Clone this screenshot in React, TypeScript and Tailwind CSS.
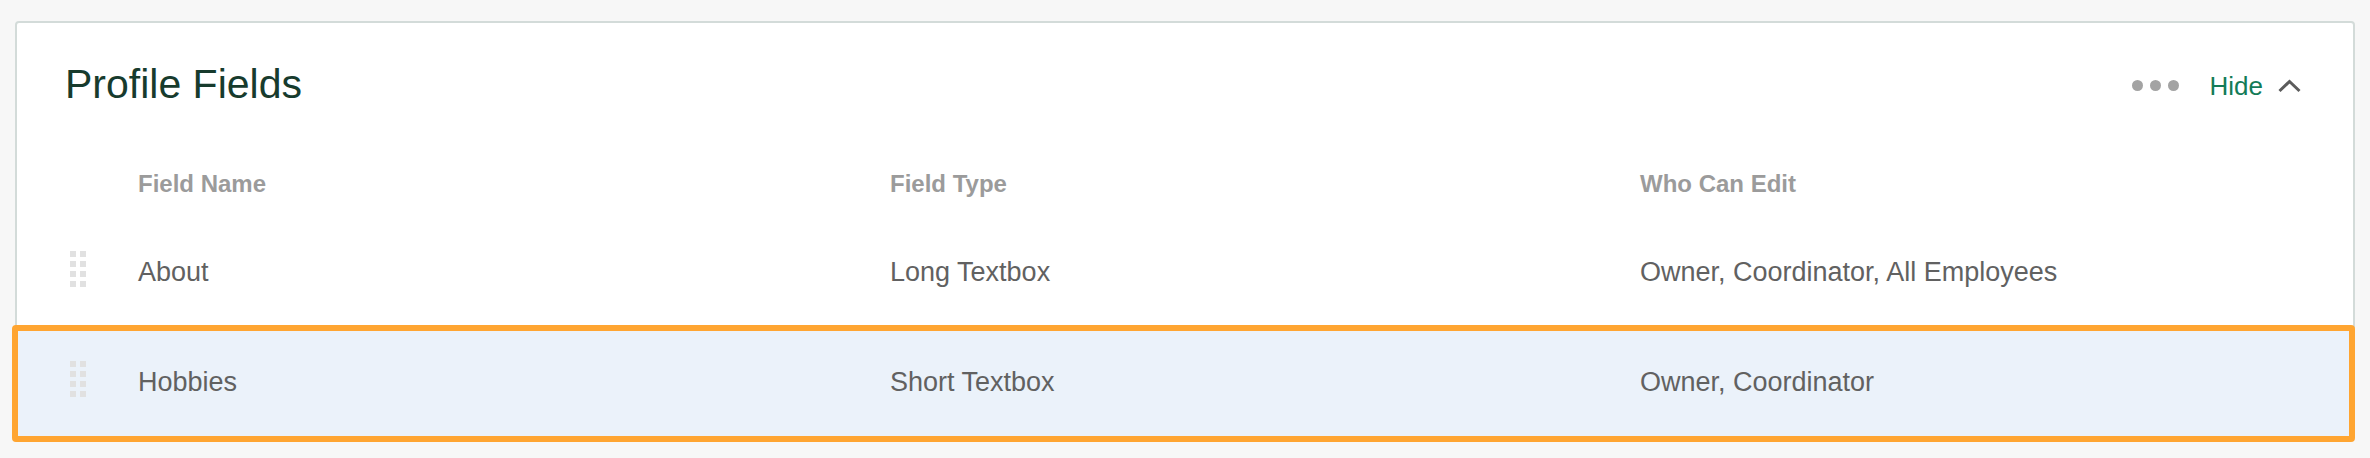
import React from "react";

const font = { fontFamily: '"Liberation Sans", Arial, sans-serif' };

function Handle() {
  return (
    <div className="grid grid-cols-[6px_6px] gap-x-[4px] gap-y-[4px] w-fit">
      {Array.from({ length: 8 }).map((_, i) => (
        <div key={i} className="w-[6px] h-[6px] bg-[#e1e1e1]" />
      ))}
    </div>
  );
}

const cols = "grid grid-cols-[121px_752px_750px_1fr] items-center";

function Row({ name, type, who }: { name: string; type: string; who: string }) {
  return (
    <div className={`${cols} h-[110px] text-[27px] leading-[34px] text-[#616161]`}>
      <div className="pl-[53px] -mt-[6px]">
        <Handle />
      </div>
      <div>{name}</div>
      <div>{type}</div>
      <div>{who}</div>
    </div>
  );
}

export default function App() {
  return (
    <div className="min-h-[458px] w-[2370px] bg-[#f7f7f7] px-[15px] pt-[21px]" style={font}>
      <div className="border-2 border-[#d3dbd9] rounded-[4px] bg-white">
        <div className="flex items-center justify-between pl-[48px] pr-[51px] pt-[37px]">
          <h2 className="text-[41px] leading-[48px] text-[#173b2d] font-normal">Profile Fields</h2>
          <div className="flex items-center mt-[3px]">
            <div className="flex items-center gap-[7px]">
              <span className="w-[11px] h-[11px] rounded-full bg-[#a3a3a3]" />
              <span className="w-[11px] h-[11px] rounded-full bg-[#a3a3a3]" />
              <span className="w-[11px] h-[11px] rounded-full bg-[#a3a3a3]" />
            </div>
            <span className="ml-[31px] text-[26px] leading-[34px] text-[#137b57]">Hide</span>
            <svg className="ml-[14px]" width="25" height="14" viewBox="0 0 25 14" fill="none">
              <polyline points="2.5,12 12.5,2.5 22.5,12" stroke="#5c5c5c" strokeWidth="3" strokeLinecap="butt" strokeLinejoin="miter" />
            </svg>
          </div>
        </div>
        <div className={`${cols} pt-[60px] pb-[17px] text-[24px] leading-[32px] font-bold text-[#9b9b9b]`}>
          <div />
          <div>Field Name</div>
          <div>Field Type</div>
          <div>Who Can Edit</div>
        </div>
        <Row name="About" type="Long Textbox" who="Owner, Coordinator, All Employees" />
        <div className="relative bg-[#ebf2fa]">
          <Row name="Hobbies" type="Short Textbox" who="Owner, Coordinator" />
          <div className="pointer-events-none absolute -top-[2px] -bottom-[5px] -left-[5px] -right-[2px] border-[6px] border-[#ffa531] rounded-[4px]" />
        </div>
      </div>
    </div>
  );
}
